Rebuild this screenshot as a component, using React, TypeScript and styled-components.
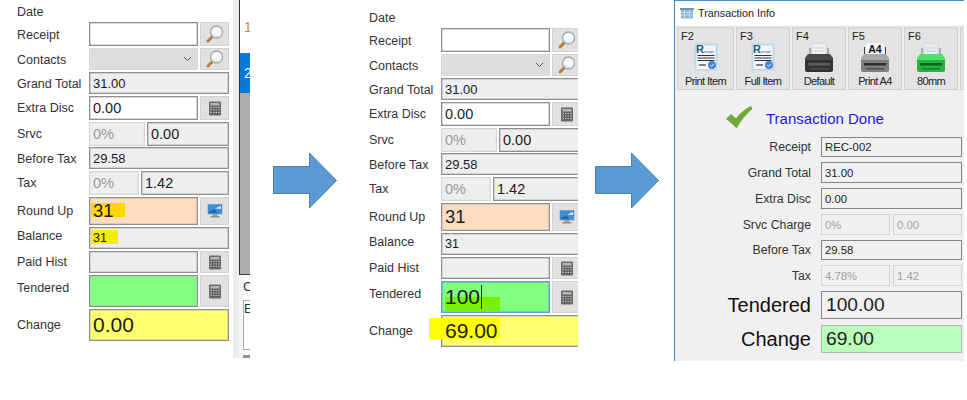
import React from 'react';
import styled, { createGlobalStyle } from 'styled-components';

const GlobalStyle = createGlobalStyle`
  html, body {
    margin: 0;
    padding: 0;
    background: #fff;
    font-family: "Liberation Sans", Arial, sans-serif;
  }
`;

// -----------------------------------------------------------------------------
// Icons
// -----------------------------------------------------------------------------
const MagnifierIcon = (): JSX.Element => (
  <svg width="18" height="18" viewBox="0 0 18 18">
    <path d="M7 11 L2 16" stroke="#b5803f" strokeWidth="3" strokeLinecap="round" />
    <circle cx="10.5" cy="7" r="6" fill="#f4f9fc" stroke="#a9a9a9" strokeWidth="1.4" />
    <path d="M7 9 A5 5 0 0 0 12 11.5" fill="none" stroke="#cfe0ea" strokeWidth="1.5" />
  </svg>
);

const CalculatorIcon = (): JSX.Element => (
  <svg width="14" height="15" viewBox="0 0 14 15">
    <rect x="1" y="0.5" width="12" height="14" rx="1" fill="#6a6a6a" />
    <rect x="2.5" y="2" width="9" height="2.5" fill="#b5b5b5" />
    <path d="M2.5 6.5h9M2.5 9h9M2.5 11.5h9" stroke="#c4c4c4" strokeWidth="1" />
    <path d="M4.5 5.5v7.5M7 5.5v7.5M9.5 5.5v7.5" stroke="#555" strokeWidth="1" />
  </svg>
);

const MonitorIcon = (): JSX.Element => (
  <svg width="16" height="16" viewBox="0 0 16 16">
    <rect x="5.5" y="10" width="5" height="3" fill="#a8a8a8" />
    <rect x="3.5" y="13" width="9" height="1.5" fill="#8d8d8d" />
    <rect x="1" y="1.5" width="14" height="9.5" fill="#3a8fdc" stroke="#7d8f9e" strokeWidth="0.6" />
    <path d="M8 5.5 L14 3 V6 Z" fill="#d7eeff" />
    <path d="M2 9 L8 6 L10 10 H2 Z" fill="#2167ac" />
  </svg>
);

const ChevronIcon = (): JSX.Element => (
  <svg width="9" height="6" viewBox="0 0 9 6">
    <path d="M1 1 L4.5 4.5 L8 1" fill="none" stroke="#555" strokeWidth="1" />
  </svg>
);

const ArrowIcon = (): JSX.Element => (
  <svg width="64" height="58" viewBox="0 0 64 58">
    <path d="M0.5 14.5 H36.5 V1 L63.5 28.5 L36.5 56 V41.5 H0.5 Z" fill="#5b9bd5" stroke="#4a7fb0" strokeWidth="1" />
  </svg>
);

const WindowIcon = (): JSX.Element => (
  <svg width="14" height="11" viewBox="0 0 14 11">
    <rect x="0" y="0" width="14" height="2" fill="#6f96b4" />
    <rect x="1" y="2" width="12" height="8.5" fill="#8fb4cf" />
    <path d="M1 4.5h12M1 7h12M4.5 2v8.5M9.5 2v8.5" stroke="#d5e4ef" strokeWidth="0.8" />
  </svg>
);

const CheckIcon = (): JSX.Element => (
  <svg width="28" height="24" viewBox="0 0 28 24">
    <path d="M1 14 L6 9 L11 13.5 C15 8 20 3.5 26 1 L27.5 4 C20 10 15.5 17 11.5 23.5 C8 19.5 4.5 16.5 1 14 Z" fill="#6fa93a" />
  </svg>
);

const ReceiptIcon = (): JSX.Element => (
  <svg width="24" height="28" viewBox="0 0 24 28">
    <rect x="0.5" y="0.5" width="23" height="27" fill="#bcd8ec" />
    <rect x="2.5" y="2.5" width="19" height="23.5" fill="#f2f6fa" />
    <text x="2" y="10" fontFamily="Liberation Sans" fontSize="11" fontWeight="700" fill="#235f75">R</text>
    <text x="10" y="10" fontFamily="Liberation Sans" fontSize="3.6" fill="#235f75">eceipt</text>
    <path d="M3.5 12.5h17M3.5 15h17M3.5 17.5h17" stroke="#333" strokeWidth="1.2" />
    <path d="M5 22h7" stroke="#666" strokeWidth="1.6" />
    <circle cx="18" cy="22" r="4" fill="#3f86cf" />
    <path d="M16.2 22 L17.6 23.5 L20 20.8" fill="none" stroke="#fff" strokeWidth="0.9" />
  </svg>
);

interface IPrinter {
  body: string;
  top: string;
  slot: string;
  paper: string;
  label?: string;
}

const PrinterIcon = ({ body, top, slot, paper, label }: IPrinter): JSX.Element => (
  <svg width="30" height="30" viewBox="0 0 30 30">
    {label ? (
      <>
        <path d="M4.5 13V4M25.5 13V4" stroke="#444" strokeWidth="1" />
        <rect x="6" y="0.5" width="18" height="13" fill={paper} />
        <text x="15" y="9.5" textAnchor="middle" fontFamily="Liberation Sans" fontSize="10.5" fontWeight="700" fill="#111">{label}</text>
      </>
    ) : (
      <>
        <path d="M6 12V5M24 12V5" stroke="#777" strokeWidth="1" />
        <rect x="8" y="0.5" width="14" height="12" rx="1" fill={paper} stroke="#c9c9c9" strokeWidth="0.6" />
        <path d="M10 5h10M10 8h10" stroke="#cfcfcf" strokeWidth="1" />
      </>
    )}
    <path d="M4 11 H26 L29 15 V18 H1 V15 Z" fill={top} />
    <path d="M1 17 H29 V27 Q29 29 27 29 H3 Q1 29 1 27 Z" fill={body} />
    <rect x="4" y="20" width="22" height="2.5" fill={slot} />
    <rect x="6" y="25" width="18" height="1.5" fill={slot} opacity="0.6" />
  </svg>
);

// -----------------------------------------------------------------------------
// POS form
// -----------------------------------------------------------------------------
const Panel = styled.div<{ $width: number; $top: number }>`
  width: ${(p) => p.$width}px;
  padding: ${(p) => p.$top}px 0 0 17px;
  box-sizing: border-box;
  overflow: hidden;
  flex: none;
`;

const Row = styled.div<{ $h: number; $gap?: number }>`
  display: flex;
  height: ${(p) => p.$h}px;
  margin-bottom: ${(p) => p.$gap ?? 2}px;
  width: 212px;
`;

const Label = styled.div<{ $lift?: number; $drop?: number }>`
  width: 72px;
  flex: none;
  display: flex;
  align-items: center;
  padding-top: ${(p) => p.$drop ?? 0}px;
  padding-bottom: ${(p) => p.$lift ?? 0}px;
  box-sizing: border-box;
  font-size: 12.5px;
  color: #333;
  white-space: nowrap;
`;

const Cells = styled.div`
  display: flex;
  gap: 2px;
  width: 140px;
`;

const toneBg: Record<string, string> = {
  white: '#fff',
  gray: '#eeeeee',
  combo: '#dcdcdc',
  orange: '#fddcbf',
  green: '#80ff80',
  yellow: '#ffff70',
};

const Field = styled.div<{ $tone?: string; $size?: number; $width?: number; $muted?: boolean; $focus?: boolean }>`
  position: relative;
  box-sizing: border-box;
  display: flex;
  align-items: center;
  justify-content: space-between;
  flex: ${(p) => (p.$width ? `0 0 ${p.$width}px` : '1 1 0')};
  min-width: 0;
  padding: 0 5px 0 3px;
  background: ${(p) => toneBg[p.$tone ?? 'gray']};
  border: 1px solid ${(p) => (p.$focus ? '#5d9fd8' : p.$muted ? '#d6d6d6' : '#8f8f8f')};
  box-shadow: inset 0 0 0 0.5px ${(p) => (p.$focus ? '#5d9fd8' : p.$muted ? '#e4e4e4' : '#b5b5b5')};
  font-size: ${(p) => p.$size ?? 13}px;
  color: ${(p) => (p.$muted ? '#9a9a9a' : '#1c1c1c')};
  white-space: nowrap;
`;

const Value = styled.span<{ $caret?: boolean }>`
  position: relative;
  z-index: 1;
  ${(p) => (p.$caret ? 'border-right: 1px solid #222; padding-right: 1px;' : '')}
`;

const Marker = styled.span<{ $left: number; $top: number; $w: number; $h: number; $color: string }>`
  position: absolute;
  left: ${(p) => p.$left}px;
  top: ${(p) => p.$top}px;
  width: ${(p) => p.$w}px;
  height: ${(p) => p.$h}px;
  background: ${(p) => p.$color};
`;

const IconButton = styled.div`
  flex: 0 0 29px;
  box-sizing: border-box;
  display: flex;
  align-items: center;
  justify-content: center;
  background: #e1e1e1;
  border: 1px solid #d2d2d2;
`;

interface IPosForm {
  width: number;
  top: number;
  tendered?: string;
  change: string;
  annotated?: boolean;
}

const PosForm = ({ width, top, tendered, change, annotated }: IPosForm): JSX.Element => (
  <Panel $width={width} $top={top}>
    <Row $h={22} $gap={0}><Label $drop={2}>Date</Label></Row>
    <Row $h={24}>
      <Label $drop={2}>Receipt</Label>
      <Cells>
        <Field $tone="white" />
        <IconButton><MagnifierIcon /></IconButton>
      </Cells>
    </Row>
    <Row $h={22}>
      <Label $drop={2}>Contacts</Label>
      <Cells>
        <Field $tone="combo" $muted><span /><ChevronIcon /></Field>
        <IconButton><MagnifierIcon /></IconButton>
      </Cells>
    </Row>
    <Row $h={22}>
      <Label $drop={2}>Grand Total</Label>
      <Cells><Field $size={13}><Value>31.00</Value></Field></Cells>
    </Row>
    <Row $h={24}>
      <Label>Extra Disc</Label>
      <Cells>
        <Field $tone="white" $size={14.5}><Value>0.00</Value></Field>
        <IconButton><CalculatorIcon /></IconButton>
      </Cells>
    </Row>
    <Row $h={24} $gap={1}>
      <Label>Srvc</Label>
      <Cells>
        <Field $width={56} $muted $size={14.5}><Value>0%</Value></Field>
        <Field $size={14.5}><Value>0.00</Value></Field>
      </Cells>
    </Row>
    <Row $h={22}>
      <Label $drop={2}>Before Tax</Label>
      <Cells><Field $size={13}><Value>29.58</Value></Field></Cells>
    </Row>
    <Row $h={24}>
      <Label>Tax</Label>
      <Cells>
        <Field $width={50} $muted $size={14.5}><Value>0%</Value></Field>
        <Field $size={14.5}><Value>1.42</Value></Field>
      </Cells>
    </Row>
    <Row $h={28}>
      <Label>Round Up</Label>
      <Cells>
        <Field $tone="orange" $size={18.5}>
          {annotated && <Marker $left={1} $top={5} $w={34} $h={14} $color="#ffd800" />}
          <Value>31</Value>
        </Field>
        <IconButton><MonitorIcon /></IconButton>
      </Cells>
    </Row>
    <Row $h={22}>
      <Label $lift={4}>Balance</Label>
      <Cells>
        <Field $size={12.5}>
          {annotated && <Marker $left={1} $top={2} $w={27} $h={14} $color="#f4ee00" />}
          <Value>31</Value>
        </Field>
      </Cells>
    </Row>
    <Row $h={22}>
      <Label>Paid Hist</Label>
      <Cells>
        <Field />
        <IconButton><CalculatorIcon /></IconButton>
      </Cells>
    </Row>
    <Row $h={32}>
      <Label $lift={7}>Tendered</Label>
      <Cells>
        <Field $tone="green" $size={21} $focus={!!tendered}>
          {tendered && <Marker $left={3} $top={15} $w={55} $h={14} $color="#78f000" />}
          {tendered && <Value $caret>{tendered}</Value>}
        </Field>
        <IconButton><CalculatorIcon /></IconButton>
      </Cells>
    </Row>
    <Row $h={32}>
      <Label>Change</Label>
      <Cells>
        <Field $tone="yellow" $size={21}>
          {!annotated && <Marker $left={-13} $top={2} $w={71} $h={21} $color="#ffff00" />}
          <Value>{change}</Value>
        </Field>
      </Cells>
    </Row>
  </Panel>
);

// -----------------------------------------------------------------------------
// Cropped grid beside the first form
// -----------------------------------------------------------------------------
const Strip = styled.div`
  flex: none;
  width: 17px;
  height: 358px;
  box-sizing: border-box;
  display: flex;
  flex-direction: column;
  padding-left: 6px;
  background: linear-gradient(to right, #ececec 0, #ececec 6px, #f2f2f2 6px, #fff 17px);
`;

const GridColumn = styled.div`
  width: 11px;
  height: 276px;
  display: flex;
  flex-direction: column;
  border-left: 1px solid #333;
  border-bottom: 1px solid #444;
  box-sizing: border-box;
  overflow: hidden;
  background: #adadad;
`;

const GridCell = styled.div<{ $h: number; $bg: string; $color: string }>`
  height: ${(p) => p.$h}px;
  flex: none;
  display: flex;
  align-items: center;
  padding-left: 4px;
  background: ${(p) => p.$bg};
  color: ${(p) => p.$color};
  font-size: 14px;
`;

const CroppedLabel = styled.div`
  font-size: 13px;
  color: #333;
  padding: 4px 0 0 4px;
  height: 25px;
  width: 11px;
  overflow: hidden;
  box-sizing: border-box;
`;

const CroppedBox = styled.div`
  margin-left: 4px;
  width: 7px;
  height: 50px;
  box-sizing: border-box;
  border: 1px solid #aaa;
  border-right: none;
  background: #fff;
  font-size: 13px;
  color: #333;
  overflow: hidden;
`;

const CroppedTick = styled.div`
  margin: 5px 0 0 4px;
  width: 7px;
  height: 3px;
  background: #8f8f8f;
`;

const ArrowSlot = styled.div<{ $left: number; $right: number }>`
  flex: none;
  margin: 152px ${(p) => p.$right}px 0 ${(p) => p.$left}px;
  height: 58px;
`;

// -----------------------------------------------------------------------------
// Transaction window
// -----------------------------------------------------------------------------
const Window = styled.div`
  flex: none;
  width: 290px;
  height: 361px;
  box-sizing: border-box;
  border-left: 1px solid #3d8bc9;
  border-top: 1px solid #3d8bc9;
  background: #f0f0f0;
  overflow: hidden;
`;

const TitleBar = styled.div`
  height: 24px;
  display: flex;
  align-items: center;
  gap: 4px;
  padding-left: 5px;
  background: #fff;
  font-size: 10.8px;
  color: #222;
`;

const Toolbar = styled.div`
  display: flex;
  gap: 2px;
  padding: 2px 0 0 2px;
  height: 63px;
`;

const ToolButton = styled.div`
  flex: none;
  width: 54px;
  height: 63px;
  box-sizing: border-box;
  display: flex;
  flex-direction: column;
  align-items: center;
  padding-top: 2px;
  background: #e3e3e3;
  border: 1px solid #cfcfcf;
  color: #222;
  font-size: 11px;
  line-height: 13px;

  &:first-child {
    width: 57px;
  }
`;

const ToolKey = styled.div`
  align-self: flex-start;
  padding-left: 3px;
  height: 13px;
`;

const ToolIcon = styled.div`
  height: 31px;
  display: flex;
  align-items: flex-start;
  justify-content: center;
`;

const ToolCaption = styled.div`
  white-space: nowrap;
  font-size: 11px;
  letter-spacing: -0.6px;
  margin-top: 1px;
`;

const Status = styled.div`
  display: flex;
  align-items: flex-start;
  height: 24px;
  margin: 15px 0 8px 50px;
  gap: 13px;
  color: #1a1adf;
  font-size: 15px;
`;

const StatusText = styled.span`
  padding-top: 5px;
`;

const InfoRow = styled.div<{ $h: number; $gap?: number }>`
  display: flex;
  align-items: center;
  height: ${(p) => p.$h}px;
  margin-bottom: ${(p) => p.$gap ?? 5}px;
`;

const InfoLabel = styled.div<{ $big?: boolean }>`
  flex: none;
  width: 136px;
  margin-right: 10px;
  text-align: right;
  font-size: ${(p) => (p.$big ? 20 : 12.3)}px;
  color: ${(p) => (p.$big ? '#111' : '#333')};
`;

const InfoCells = styled.div`
  flex: none;
  width: 141px;
  height: 100%;
  display: flex;
  gap: 3px;
`;

const InfoField = styled.div<{ $muted?: boolean; $big?: boolean; $ok?: boolean }>`
  flex: 1 1 0;
  box-sizing: border-box;
  display: flex;
  align-items: center;
  padding-left: ${(p) => (p.$big ? 4 : 3)}px;
  border: 1px solid ${(p) => (p.$muted ? '#d4d4d4' : p.$ok ? '#b5b5b5' : '#858585')};
  background: ${(p) => (p.$ok ? '#baffba' : '#f0f0f0')};
  color: ${(p) => (p.$muted ? '#a0a0a0' : '#222')};
  font-size: ${(p) => (p.$big ? 19.2 : 11.3)}px;
`;

const TransactionWindow = (): JSX.Element => (
  <Window>
    <TitleBar><WindowIcon />Transaction Info</TitleBar>
    <Toolbar>
      <ToolButton>
        <ToolKey>F2</ToolKey>
        <ToolIcon><ReceiptIcon /></ToolIcon>
        <ToolCaption>Print Item</ToolCaption>
      </ToolButton>
      <ToolButton>
        <ToolKey>F3</ToolKey>
        <ToolIcon><ReceiptIcon /></ToolIcon>
        <ToolCaption>Full Item</ToolCaption>
      </ToolButton>
      <ToolButton>
        <ToolKey>F4</ToolKey>
        <ToolIcon><PrinterIcon body="#333333" top="#4a4a4a" slot="#5c5c5c" paper="#f2f2f2" /></ToolIcon>
        <ToolCaption>Default</ToolCaption>
      </ToolButton>
      <ToolButton>
        <ToolKey>F5</ToolKey>
        <ToolIcon><PrinterIcon body="#7f7f7f" top="#a9a9a9" slot="#2e2e2e" paper="#f7f7f7" label="A4" /></ToolIcon>
        <ToolCaption>Print A4</ToolCaption>
      </ToolButton>
      <ToolButton>
        <ToolKey>F6</ToolKey>
        <ToolIcon><PrinterIcon body="#22b53f" top="#4fe06a" slot="#0e5f22" paper="#e3eefa" /></ToolIcon>
        <ToolCaption>80mm</ToolCaption>
      </ToolButton>
      <ToolButton />
    </Toolbar>
    <Status><CheckIcon /><StatusText>Transaction Done</StatusText></Status>
    <InfoRow $h={20}>
      <InfoLabel>Receipt</InfoLabel>
      <InfoCells><InfoField>REC-002</InfoField></InfoCells>
    </InfoRow>
    <InfoRow $h={21}>
      <InfoLabel>Grand Total</InfoLabel>
      <InfoCells><InfoField>31.00</InfoField></InfoCells>
    </InfoRow>
    <InfoRow $h={21}>
      <InfoLabel>Extra Disc</InfoLabel>
      <InfoCells><InfoField>0.00</InfoField></InfoCells>
    </InfoRow>
    <InfoRow $h={21}>
      <InfoLabel>Srvc Charge</InfoLabel>
      <InfoCells>
        <InfoField $muted>0%</InfoField>
        <InfoField $muted>0.00</InfoField>
      </InfoCells>
    </InfoRow>
    <InfoRow $h={20}>
      <InfoLabel>Before Tax</InfoLabel>
      <InfoCells><InfoField>29.58</InfoField></InfoCells>
    </InfoRow>
    <InfoRow $h={21}>
      <InfoLabel>Tax</InfoLabel>
      <InfoCells>
        <InfoField $muted>4.78%</InfoField>
        <InfoField $muted>1.42</InfoField>
      </InfoCells>
    </InfoRow>
    <InfoRow $h={28} $gap={6}>
      <InfoLabel $big>Tendered</InfoLabel>
      <InfoCells><InfoField $big>100.00</InfoField></InfoCells>
    </InfoRow>
    <InfoRow $h={28} $gap={0}>
      <InfoLabel $big>Change</InfoLabel>
      <InfoCells><InfoField $big $ok>69.00</InfoField></InfoCells>
    </InfoRow>
  </Window>
);

// -----------------------------------------------------------------------------
// Page
// -----------------------------------------------------------------------------
const Page = styled.div`
  display: flex;
  align-items: flex-start;
  width: 967px;
  height: 400px;
  overflow: hidden;
  background: #fff;
`;

const App = (): JSX.Element => (
  <Page>
    <GlobalStyle />
    <PosForm width={233} top={0} change="0.00" annotated />
    <Strip>
      <GridColumn>
        <GridCell $h={53} $bg="#fff" $color="#c98a3a">1</GridCell>
        <GridCell $h={40} $bg="#0a78d7" $color="#fff">2</GridCell>
      </GridColumn>
      <CroppedLabel>C</CroppedLabel>
      <CroppedBox>E</CroppedBox>
      <CroppedTick />
    </Strip>
    <ArrowSlot $left={23} $right={15}><ArrowIcon /></ArrowSlot>
    <PosForm width={226} top={6} tendered="100" change="69.00" />
    <ArrowSlot $left={17} $right={15}><ArrowIcon /></ArrowSlot>
    <TransactionWindow />
  </Page>
);

export default App;
